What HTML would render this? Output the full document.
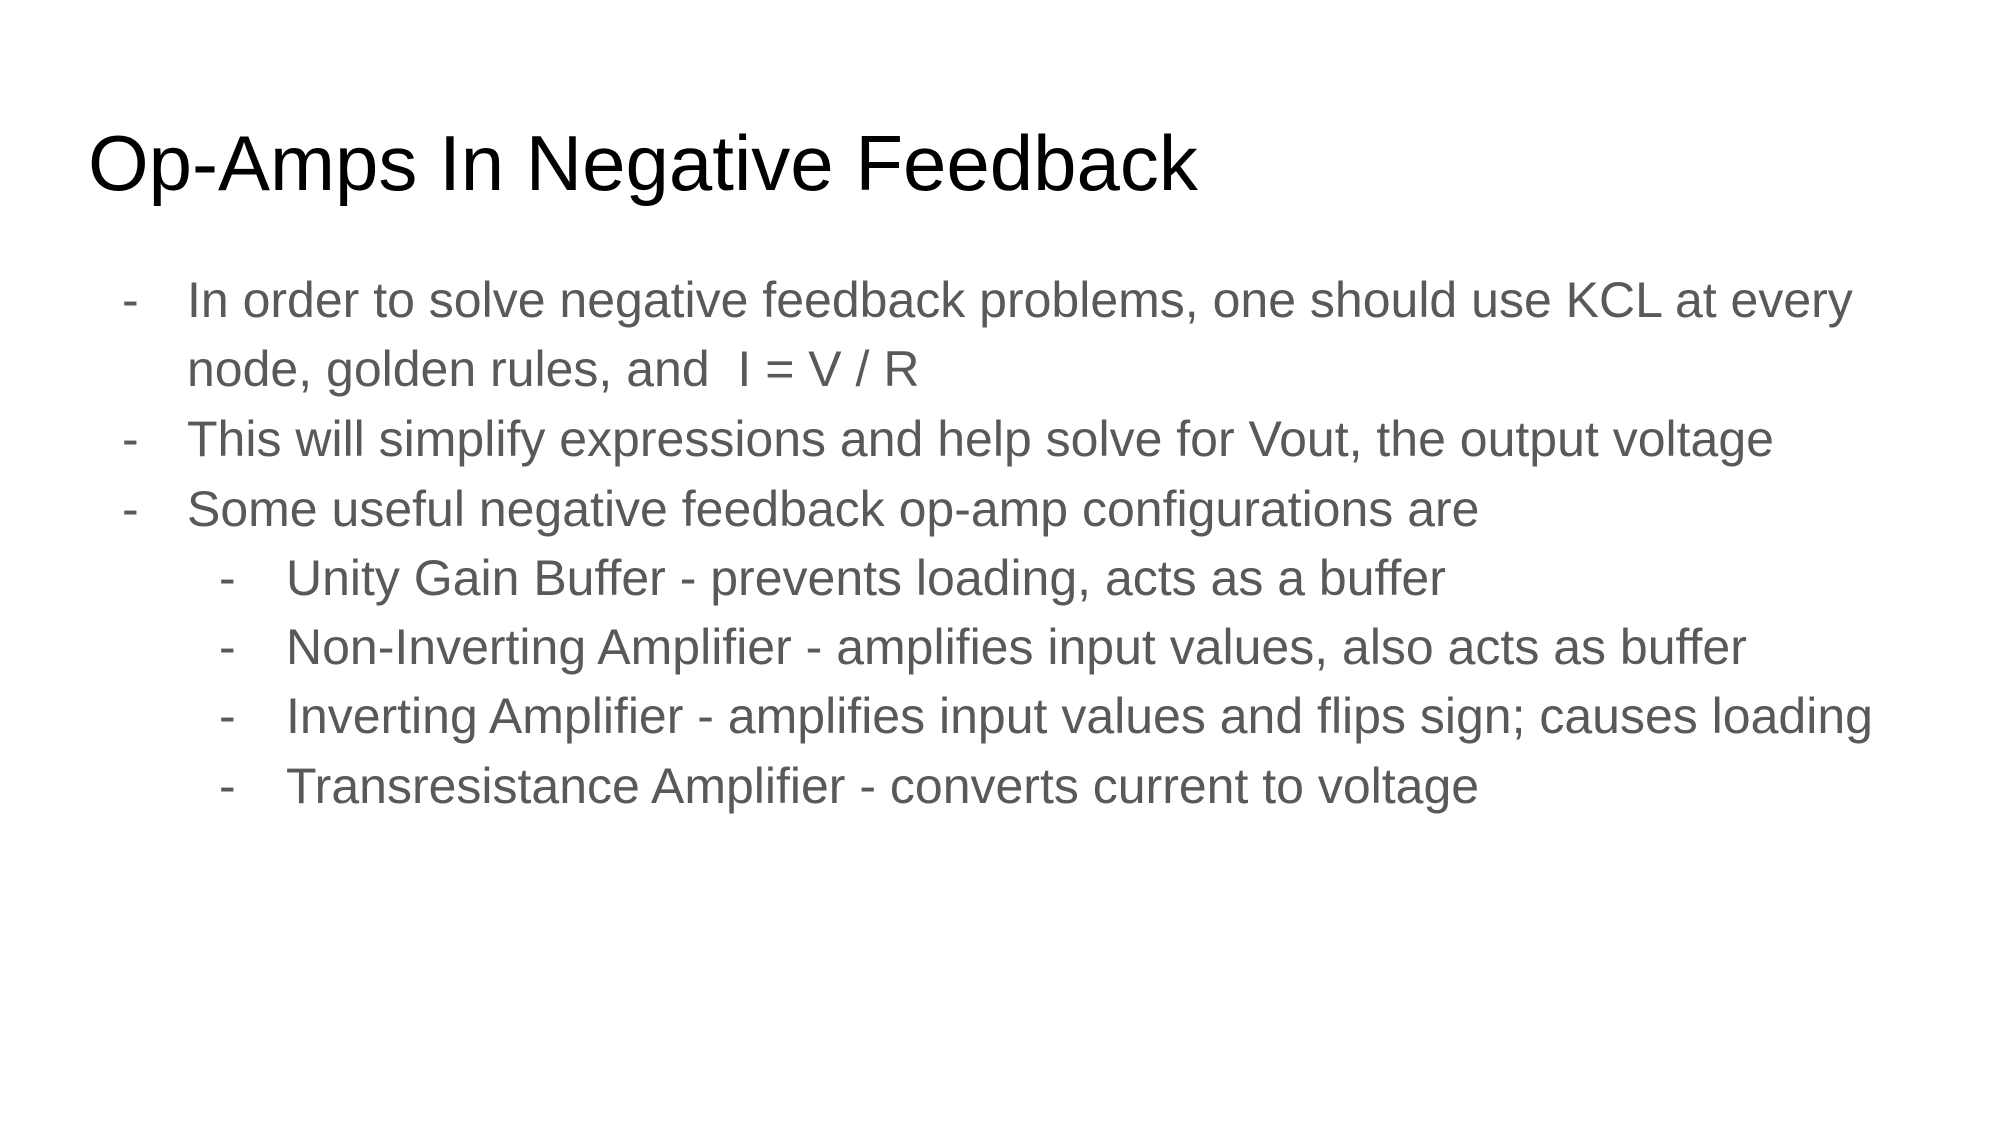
<!DOCTYPE html>
<html><head><style>
html,body{margin:0;padding:0;background:#fff;}
body{width:2000px;height:1125px;position:relative;overflow:hidden;font-family:"Liberation Sans",Arial,sans-serif;}
.t{position:absolute;left:88px;top:124px;font-size:78px;color:#000;line-height:1;white-space:nowrap;}
.l{position:absolute;font-size:50px;color:#595959;line-height:1;white-space:nowrap;}
</style></head><body>
<div class="t">Op-Amps In Negative Feedback</div>
<div class="l" style="left:122px;top:275px">-</div>
<div class="l" style="left:187px;top:275px">In order to solve negative feedback problems, one should use KCL at every</div>
<div class="l" style="left:187px;top:344px">node, golden rules, and&nbsp; I = V / R</div>
<div class="l" style="left:122px;top:414px">-</div>
<div class="l" style="left:187px;top:414px">This will simplify expressions and help solve for Vout, the output voltage</div>
<div class="l" style="left:122px;top:484px">-</div>
<div class="l" style="left:187px;top:484px">Some useful negative feedback op-amp configurations are</div>
<div class="l" style="left:219px;top:553px">-</div>
<div class="l" style="left:286px;top:553px">Unity Gain Buffer - prevents loading, acts as a buffer</div>
<div class="l" style="left:219px;top:622px">-</div>
<div class="l" style="left:286px;top:622px">Non-Inverting Amplifier - amplifies input values, also acts as buffer</div>
<div class="l" style="left:219px;top:691px">-</div>
<div class="l" style="left:286px;top:691px">Inverting Amplifier - amplifies input values and flips sign; causes loading</div>
<div class="l" style="left:219px;top:761px">-</div>
<div class="l" style="left:286px;top:761px">Transresistance Amplifier - converts current to voltage</div>
</body></html>
